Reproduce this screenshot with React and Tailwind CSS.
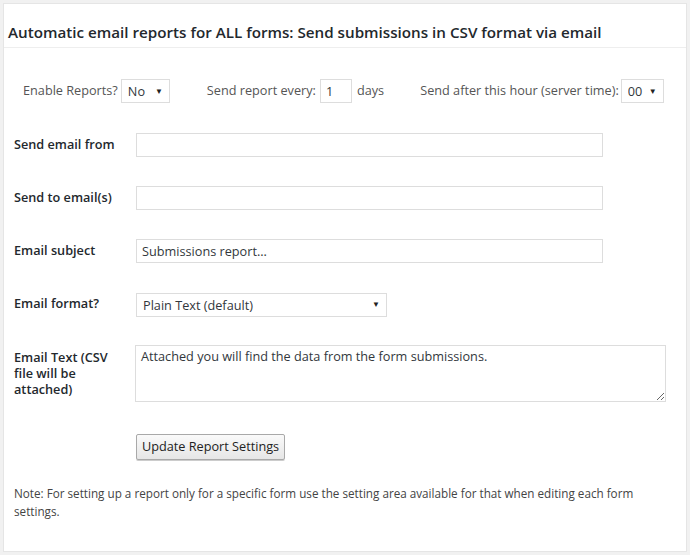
import { useState } from 'react'

const FONT = { fontFamily: '"Open Sans", "Noto Sans", sans-serif' }

function Select({ value, options, className = '', onChange }) {
  return (
    <div className={`relative ${className}`}>
      <select
        value={value}
        onChange={e => onChange(e.target.value)}
        className="appearance-none w-full h-full bg-white border border-[#dddddd] pl-[6px] pr-[14px] text-[12.7px] text-[#32373c] pt-[2px] outline-none"
        style={FONT}
      >
        {options.map(o => <option key={o}>{o}</option>)}
      </select>
      <span className="pointer-events-none absolute right-[7px] top-[6px] text-[8px] text-[#222]">▼</span>
    </div>
  )
}

const ROWS = [
  { label: 'Send email from', value: '' },
  { label: 'Send to email(s)', value: '' },
  { label: 'Email subject', value: 'Submissions report...' },
]

export default function App() {
  const [enable, setEnable] = useState('No')
  const [hour, setHour] = useState('00')
  const [format, setFormat] = useState('Plain Text (default)')

  return (
    <div className="min-h-screen bg-[#f1f1f1] p-[3px]" style={FONT}>
      <div className="bg-white border border-[#e5e5e5] h-[549px] flex flex-col">
        {/* Header */}
        <div className="h-[44px] border-b border-[#eeeeee] flex items-end pb-[3px] pl-[4px]">
          <h2 className="text-[15.2px] font-semibold text-[#23282d]">
            Automatic email reports for ALL forms: Send submissions in CSV format via email
          </h2>
        </div>

        {/* Top settings */}
        <div className="flex items-center h-[24px] mt-[31px] text-[12.7px] text-[#555]">
          <span className="ml-[19px]">Enable Reports?</span>
          <Select value={enable} options={['No', 'Yes']} onChange={setEnable} className="ml-[3px] w-[49px] h-[24px]" />
          <span className="ml-[37px]">Send report every:</span>
          <input
            defaultValue="1"
            className="ml-[4px] w-[32px] h-[24px] border border-[#dddddd] px-[5px] text-[12.7px] text-[#32373c] outline-none"
            style={FONT}
          />
          <span className="ml-[5px]">days</span>
          <span className="ml-[36px]">Send after this hour (server time):</span>
          <Select value={hour} options={['00', '01', '02', '03']} onChange={setHour} className="ml-[2px] w-[43px] h-[24px]" />
        </div>

        {/* Text rows */}
        <div className="flex flex-col gap-[29px] mt-[30px] pl-[10px]">
          {ROWS.map(r => (
            <div key={r.label} className="flex items-center h-[24px]">
              <label className="w-[122px] text-[12.7px] font-semibold text-[#23282d]">{r.label}</label>
              <input
                defaultValue={r.value}
                className="w-[467px] h-[24px] border border-[#dddddd] px-[5px] text-[12.7px] text-[#32373c] outline-none"
                style={FONT}
              />
            </div>
          ))}
          <div className="flex items-center h-[24px]">
            <label className="w-[122px] text-[12.7px] font-semibold text-[#23282d]">Email format?</label>
            <Select
              value={format}
              options={['Plain Text (default)', 'HTML']}
              onChange={setFormat}
              className="w-[251px] h-[24px]"
            />
          </div>
          <div className="flex items-start">
            <label className="w-[121px] pt-[4px] text-[12.7px] leading-[16px] font-semibold text-[#23282d] pr-[20px]">
              Email Text (CSV file will be attached)
            </label>
            <textarea
              defaultValue="Attached you will find the data from the form submissions."
              className="w-[531px] h-[57px] border border-[#dddddd] px-[5px] pt-[1px] text-[12.7px] leading-[18px] text-[#32373c] outline-none"
              style={FONT}
            />
          </div>
        </div>

        {/* Button */}
        <div className="mt-[31px] pl-[132px]">
          <button
            className="h-[26px] px-[5px] border border-[#a9a9a9] rounded-[2px] bg-gradient-to-b from-[#fafafa] to-[#e6e6e6] text-[12.7px] text-[#222] shadow-[0_1px_0_#ccc]"
            style={FONT}
          >
            Update Report Settings
          </button>
        </div>

        {/* Note */}
        <p className="mt-[24px] pl-[10px] pr-[20px] text-[11.7px] leading-[18px] text-[#444]">
          Note: For setting up a report only for a specific form use the setting area available for that when editing each form settings.
        </p>
      </div>
    </div>
  )
}
